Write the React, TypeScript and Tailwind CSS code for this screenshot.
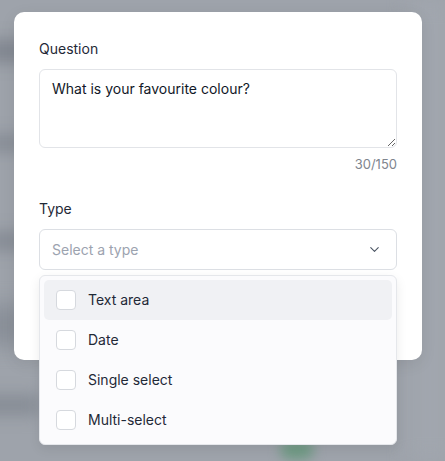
import React from "react";
import { ChevronDown } from "lucide-react";

const items = ["Text area", "Date", "Single select", "Multi-select"];

export default function App() {
  return (
    <div
      className="relative w-[445px] h-[461px] overflow-hidden bg-[#9ea3ab] pt-[12px] pl-[14px]"
      style={{ fontFamily: "Inter, 'Noto Sans', sans-serif" }}
    >
      {/* blurred background content behind the overlay */}
      <div className="absolute inset-0 pointer-events-none">
        <div className="absolute left-[-20px] top-[40px] w-[60px] h-[22px] bg-[#80868f] blur-[8px]" />
        <div className="absolute left-[-20px] top-[135px] w-[50px] h-[16px] bg-[#858b94] blur-[8px]" />
        <div className="absolute left-[-20px] top-[232px] w-[50px] h-[18px] bg-[#858b94] blur-[8px]" />
        <div className="absolute left-[-20px] top-[305px] w-[50px] h-[40px] bg-[#8a9099] blur-[10px]" />
        <div className="absolute left-[-20px] top-[395px] w-[60px] h-[20px] bg-[#868c95] blur-[8px]" />
        <div className="absolute left-[280px] top-[440px] w-[34px] h-[20px] rounded-full bg-[#6f9a84] blur-[6px]" />
        <div className="absolute left-[410px] top-[0px] w-[40px] h-[461px] bg-[#a1a6ae] blur-[10px]" />
      </div>

      <div className="relative flex w-[408px] h-[348px] flex-col rounded-[10px] bg-white px-[25px] pt-[27px] shadow-[0_4px_16px_rgba(0,0,0,0.08)]">
        <label className="text-[14px] leading-[20px] text-[#1f2937]">Question</label>
        <textarea
          defaultValue="What is your favourite colour?"
          className="mt-[10px] block w-full h-[79px] rounded-[6px] border border-[#e2e4e8] px-[12px] py-[9px] text-[14px] leading-[20px] text-[#111827] outline-none"
          style={{ fontFamily: "Inter, 'Noto Sans', sans-serif" }}
        />
        <div className="mt-[8px] text-right text-[13px] leading-[16px] text-[#80858e]">30/150</div>
        <label className="mt-[27px] text-[14px] leading-[20px] text-[#1f2937]">Type</label>
        <div className="relative mt-[10px]">
          <div className="flex h-[41px] items-center justify-between rounded-[6px] border border-[#dcdfe4] pl-[12px] pr-[14px]">
            <span className="text-[14px] text-[#9ca3af]">Select a type</span>
            <ChevronDown size={15} strokeWidth={1.75} className="text-[#4b5563]" />
          </div>

          {/* dropdown menu */}
          <div className="absolute left-0 right-0 top-[46px] z-10 flex flex-col rounded-[6px] border border-[#e5e7eb] bg-[#fbfbfd] p-[4px] shadow-[0_4px_12px_rgba(0,0,0,0.08)]">
            {items.map((it, i) => (
              <div
                key={it}
                className={
                  "flex h-[40px] items-center gap-[12px] rounded-[5px] pl-[12px] " +
                  (i === 0 ? "bg-[#f0f1f4]" : "")
                }
              >
                <div className="h-[20px] w-[20px] rounded-[4px] border border-[#d6d9de] bg-white" />
                <span className="text-[14px] leading-[20px] text-[#1f2937]">{it}</span>
              </div>
            ))}
          </div>
        </div>
      </div>
    </div>
  );
}
